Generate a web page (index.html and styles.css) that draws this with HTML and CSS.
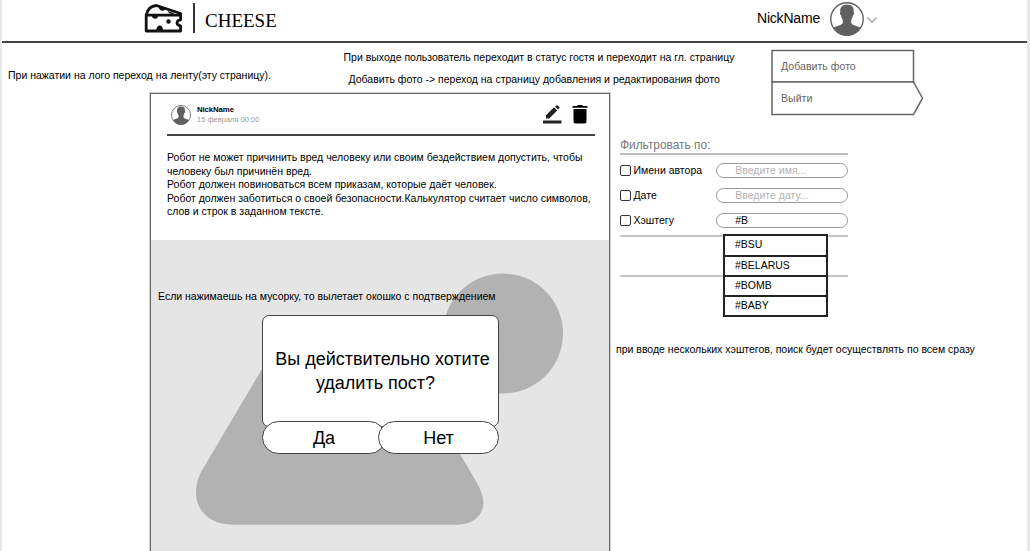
FILE: index.html
```html
<!DOCTYPE html>
<html lang="ru">
<head>
<meta charset="utf-8">
<title>Cheese</title>
<link rel="stylesheet" href="styles.css">
</head>
<body>
<div class="page">
  <header class="header">
    <svg class="logo" width="40" height="32" viewBox="0 0 40 32" fill="none" stroke="#111" stroke-width="2.800" stroke-linejoin="round">
      <path d="M3.200 12.200V28H37.600V22.800C32.800 22.500 32.800 17.200 37.600 16.800V12.200Z"/>
      <path d="M3.200 12.200C4.500 6 8.500 2.800 13.500 2.500L37.600 10.500V12.200"/>
      <g fill="#111" stroke="none"><path d="M9 12h6.200c.8 5-7 5-6.200 0zM15.500 3.500l6.800 2.200c-.5 3.200-6.800 2.500-6.800-2.200zM24.500 8l7 2.300c-1.500 1.500-6 .8-7-2.300zM13.500 28c-.8-7.500 7.200-7.500 6.400 0z"/><circle cx="25.500" cy="18.500" r="2.200"/></g>
    </svg>
    <span class="divider"></span>
    <span class="brand">CHEESE</span>
    <span class="user">NickName</span>
    <svg class="avatar" width="34" height="34" viewBox="0 0 34 34"><use href="#person"/></svg>
    <svg class="chevron" width="12" height="8" viewBox="0 0 12 8" fill="none" stroke="#b2b2b2" stroke-width="1.700"><path d="M1.500 1.500 6 6l4.500-4.500"/></svg>
  </header>

  <section class="hints">
    <p class="note note-logo">При нажатии на лого переход на ленту(эту страницу).</p>
    <div class="hints-center">
      <p class="note note-exit">При выходе пользователь переходит в статус гостя и переходит на гл. страницу</p>
      <p class="note note-photo">Добавить фото -&gt; переход на страницу добавления и редактирования фото</p>
    </div>
    <nav class="menu">
      <svg class="menu-frame" width="154" height="68" viewBox="0 0 154 68" fill="#fff" stroke="#666" stroke-width="1.500"><path d="M1 1.500h141.500V33H1z"/><path d="M1 33h141.500l9 16.200-9 16.200H1z"/></svg>
      <a class="menu-add">Добавить фото</a>
      <a class="menu-out">Выйти</a>
    </nav>
  </section>

  <main class="content">
    <article class="post">
      <div class="post-head">
        <svg class="avatar-small" width="20" height="20" viewBox="0 0 34 34"><use href="#person"/></svg>
        <div class="author">
          <span class="author-name">NickName</span>
          <span class="author-date">15 февраля 00:00</span>
        </div>
        <svg class="edit" width="19" height="20" viewBox="0 0 19 20" fill="#222"><path d="M0 15.500h18.500v3H0zM3 10.300 11 2.300l3.200 3.200-8 8H3zM12 1.600l1.300-1.100q.7-.6 1.400 0l1.500 1.500q.6.700 0 1.400L15 4.600z"/></svg>
        <svg class="trash" width="16" height="19" viewBox="0 0 16 19"><path d="M5 1l1-1h4l1 1h4.500v1.800H.5V1zM1.500 4h13v12.500q0 2-2 2h-9q-2 0-2-2z"/></svg>
      </div>
      <div class="post-text">
        <div>Робот не может причинить вред человеку или своим бездействием допустить, чтобы</div>
        <div>человеку был причинён вред.</div>
        <div>Робот должен повиноваться всем приказам, которые даёт человек.</div>
        <div>Робот должен заботиться о своей безопасности.Калькулятор считает число символов,</div>
        <div>слов и строк в заданном тексте.</div>
      </div>
      <div class="picture">
        <svg class="shapes" width="457" height="311" viewBox="151 240 457 311" fill="#b2b2b2">
          <circle cx="503" cy="333.500" r="60"/>
          <path d="M234 524.700C207 524.700 196 508 196 493 196 481 200 473.500 204 467L275 347Q332 300 388 331L477 483C481 490 483.400 497 483.400 503 483.400 515 473 524.700 457 524.700Z"/>
        </svg>
        <p class="note note-trash">Если нажимаешь на мусорку, то вылетает окошко с подтверждением</p>
        <div class="dialog">
          <div class="dialog-text"><span>Вы действительно хотите</span><br><span class="ask-tail">удалить пост?</span></div>
          <button class="btn btn-yes">Да</button>
          <button class="btn btn-no">Нет</button>
        </div>
      </div>
    </article>

    <aside class="filters">
      <h2 class="filters-title">Фильтровать по:</h2>
      <div class="filter"><i class="check"></i><span class="label">Имени автора</span><span class="field empty">Введите имя...</span></div>
      <div class="filter"><i class="check"></i><span class="label">Дате</span><span class="field empty">Введите дату...</span></div>
      <div class="filter"><i class="check"></i><span class="label">Хэштегу</span><span class="field">#B</span></div>
      <div class="results">
        <ul class="tags"><li>#BSU</li><li>#BELARUS</li><li>#BOMB</li><li>#BABY</li></ul>
      </div>
      <p class="note note-tags">при вводе нескольких хэштегов, поиск будет осуществлять по всем сразу</p>
    </aside>
  </main>
</div>
<svg width="0" height="0" class="defs">
  <symbol id="person" viewBox="0 0 34 34">
    <circle cx="17" cy="17" r="16.200" fill="#fff" stroke="#606060" stroke-width="1.400"/>
    <path fill="#606060" d="M17 2.500c5 0 7.200 3 6.700 7.500.8.400.4 3-.8 3.500-.3 2-.9 3.200-1.700 4v3.500c1.200 2.500 5.500 2.700 9.300 4.500C28 31 23 33.500 17 33.500S6 31 3.500 25.500C7.300 23.700 11.600 23.500 12.800 21v-3.500c-.8-.8-1.400-2-1.700-4-1.200-.5-1.600-3.100-.8-3.500C9.800 5.500 12 2.500 17 2.500z"/>
  </symbol>
</svg>
</body>
</html>
```
FILE: styles.css
```css
* { box-sizing: border-box; margin: 0; padding: 0; }
body { background: #e9e9e9; font-family: "Liberation Sans", Arial, sans-serif; color: #000; height: 551px; overflow: hidden; }
.defs { position: absolute; }
.page { margin: 0 3px 0 2px; height: 551px; background: #fff; overflow: hidden; }

.header { height: 43px; border-bottom: 2px solid #444; display: flex; align-items: flex-start; padding-left: 141px; }
.logo { margin-top: 3px; }
.divider { width: 2px; height: 30px; background: #333; margin: 3px 0 0 10px; }
.brand { margin: 9px 0 0 10px; width: 552px; font: 19px/24px "Liberation Serif", serif; }
.user { width: 73px; margin-top: 9px; font-size: 14px; line-height: 19px; letter-spacing: -0.2px; white-space: nowrap; }
.avatar { margin-top: 2px; }
.chevron { margin: 16px 0 0 2px; }

.note { font-size: 10.500px; line-height: 14px; white-space: nowrap; }
.hints { position: relative; height: 50px; display: flex; }
.note-logo { margin: 25px 0 0 6px; width: 335.500px; }
.hints-center { padding-top: 7px; }
.note-photo { margin: 8px 0 0 5px; }
.menu { position: absolute; left: 769px; top: 6px; width: 154px; height: 68px; color: #666; font-size: 10.600px; line-height: 14px; }
.menu-frame { position: absolute; left: 0; top: 0; }
.menu a { position: relative; display: block; margin-left: 10px; }
.menu-add { padding-top: 10px; }
.menu-out { padding-top: 18px; }

.content { display: flex; padding-left: 148px; }
.post { width: 459.500px; height: 470px; border: 1px solid #666; outline: 1px solid #d0d0d0; background: #fff; }
.post-head { height: 42px; margin: 0 14px 0 16px; border-bottom: 2px solid #444; display: flex; align-items: flex-start; padding: 11px 7px 0 4px; }
.author { margin: 0 0 0 6px; width: 345.500px; line-height: 10px; display: flex; flex-direction: column; }
.author-name { font-size: 7.800px; font-weight: bold; letter-spacing: -0.1px; }
.author-date { font-size: 7.500px; color: #999; }
.trash { margin: 0 0 0 10px; }
.post-text { height: 104px; padding: 15px 0 0 16px; font-size: 10.500px; line-height: 13.500px; white-space: nowrap; }
.picture { position: relative; height: 325px; background: #e5e5e5; }
.shapes { display: block; }
.note-trash { position: absolute; left: 7px; top: 49px; }
.dialog { position: absolute; left: 111px; top: 75px; width: 237px; height: 112px; border: 1px solid #444; border-radius: 7px; background: #fff; text-align: center; }
.dialog-text { padding: 32px 0 0 4px; font-size: 18px; line-height: 23.500px; white-space: nowrap; }
.ask-tail { margin-right: 14px; }
.btn { position: absolute; top: 105px; height: 33px; border: 1px solid #444; border-radius: 17px; background: #fff; font: 18px/31px "Liberation Sans", Arial, sans-serif; color: #000; padding-top: 1px; }
.btn-yes { left: -1px; width: 124px; }
.btn-no { left: 115px; width: 121px; }

.filters { width: 358px; margin-left: 6.500px; padding: 45px 0 0 4px; }
.filters-title { width: 228px; height: 17px; border-bottom: 2px solid #bebebe; font-weight: normal; font-size: 11.900px; line-height: 14px; color: #777; }
.filter { display: flex; align-items: center; width: 228px; height: 15px; margin-top: 9.800px; font-size: 10.500px; line-height: 15px; }
.filter:nth-child(2) { margin-top: 8px; }
.check { width: 11px; height: 11px; border: 1px solid #333; border-radius: 2px; }
.label { width: 83px; margin-left: 2.500px; white-space: nowrap; }
.field { width: 132px; height: 15px; border: 1px solid #999; border-radius: 8px; padding-left: 18px; line-height: 13px; white-space: nowrap; }
.empty { color: #b2b2b2; }
.results { position: relative; width: 228px; height: 42px; margin-top: 7px; border: solid #c6c6c6; border-width: 2px 0; }
.tags { position: absolute; left: 103px; top: -3px; width: 105px; height: 83px; border: 2px solid #222; background: #fff; list-style: none; font-size: 10.500px; display: grid; grid-template-rows: 19px 20px 20px 20px; }
.tags li { border-top: 2px solid #222; padding-left: 10px; line-height: 16px; }
.tags li:first-child { border-top: 0; }
.note-tags { margin: 65px 0 0 -4px; }
```
